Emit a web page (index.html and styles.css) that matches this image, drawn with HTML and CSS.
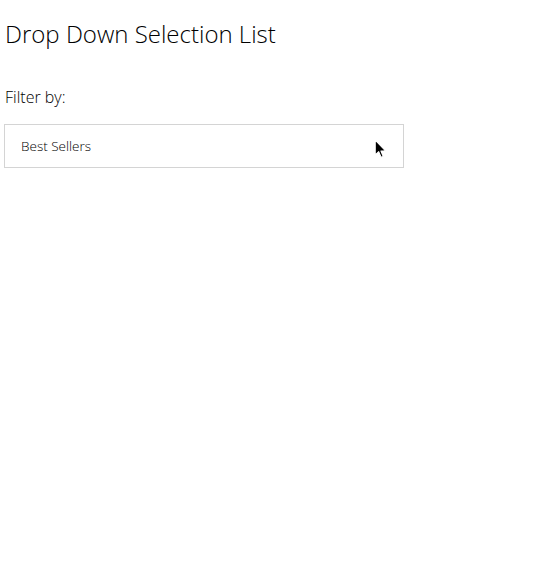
FILE: index.html
```html
<!DOCTYPE html>
<html>
<head>
<meta charset="utf-8">
<link rel="stylesheet" href="styles.css">
</head>
<body>
<h1 class="title">Drop Down Selection List</h1>
<label class="label">Filter by:</label>
<div class="select">
  <span class="select-text">Best Sellers</span>
  <svg class="cursor" width="13" height="20" viewBox="0 0 12 19">
    <path d="M1 1 L1 15 L4.3 12 L6.6 17.4 L8.6 16.6 L6.4 11.4 L10.8 11.2 Z" fill="#000" stroke="#fff" stroke-width="1" stroke-linejoin="round"/>
  </svg>
</div>
</body>
</html>
```
FILE: styles.css
```css
html, body {
  margin: 0;
  padding: 0;
  background: #fff;
}
body {
  padding: 4px;
  font-family: "Open Sans", sans-serif;
  font-weight: 300;
  color: #000;
}
.title {
  margin: 14px 0 0 1px;
  font-size: 24px;
  font-weight: 300;
  line-height: 32px;
}
.label {
  display: block;
  margin: 36px 0 0 1px;
  font-size: 16px;
  line-height: 22px;
}
.select {
  position: relative;
  margin-top: 16px;
  width: 400px;
  height: 44px;
  border: 1px solid #d4d4d4;
  display: flex;
  align-items: center;
  padding-left: 16px;
  box-sizing: border-box;
}
.select-text {
  font-size: 13.5px;
  font-weight: 300;
  color: #000;
}
.cursor {
  position: absolute;
  left: 369px;
  top: 14px;
}
```
